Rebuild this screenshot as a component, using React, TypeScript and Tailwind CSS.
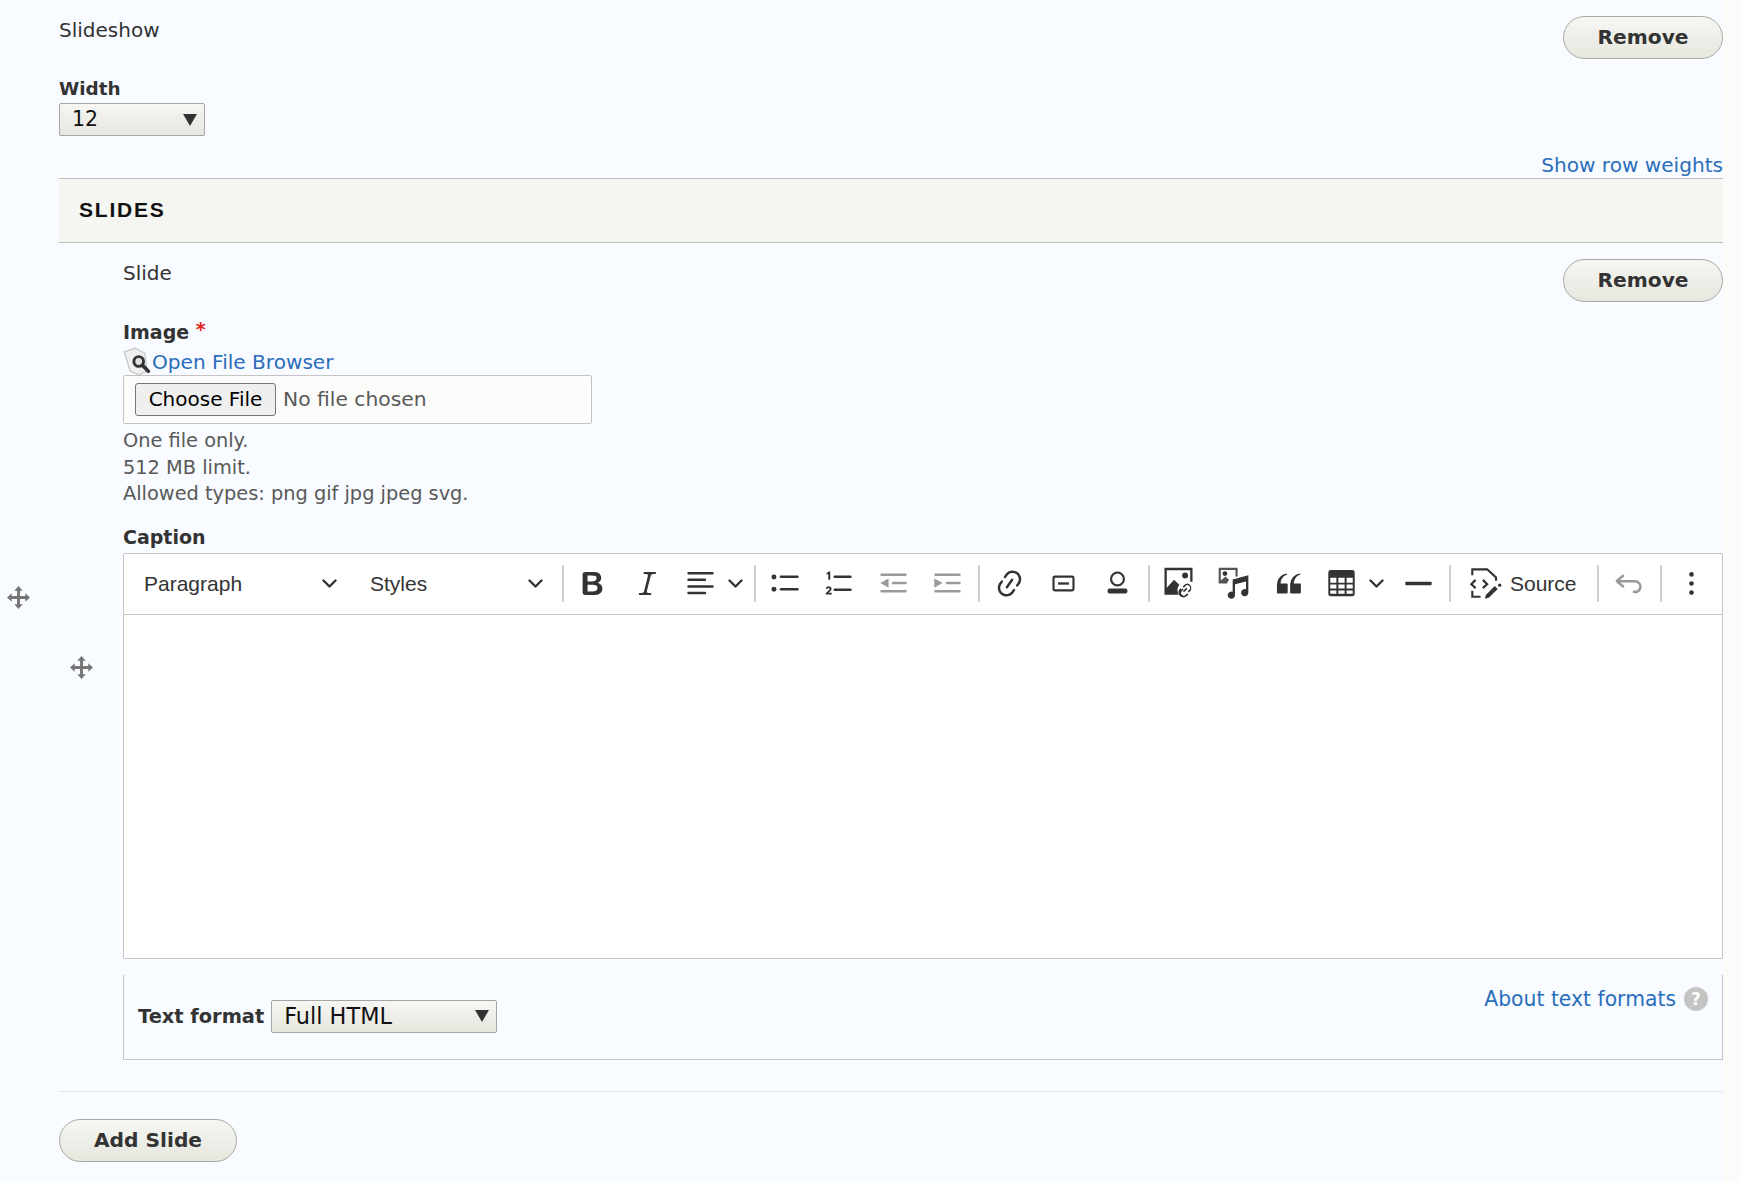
import React from "react";

const Ico = ({ children, className = "text-[#333]" }: { children: React.ReactNode; className?: string }) => (
  <svg viewBox="0 0 20 20" className={`w-[33px] h-[33px] shrink-0 fill-current ${className}`}>
    {children}
  </svg>
);

const Chevron = () => (
  <svg viewBox="0 0 10 10" className="w-[15px] h-[15px] shrink-0 fill-none stroke-[#333] stroke-[1.6]">
    <path d="M1 3l4 4 4-4" strokeLinecap="round" strokeLinejoin="round" />
  </svg>
);

const Sep = ({ className = "" }: { className?: string }) => (
  <div className={`w-[2px] h-[37px] bg-[#cfcfd3] shrink-0 ${className}`} />
);

const Btn = ({ w, children }: { w: string; children: React.ReactNode }) => (
  <div className={`${w} shrink-0 flex items-center justify-center h-full`}>{children}</div>
);

const Grip = () => (
  <svg viewBox="0 0 22 22" className="w-[23px] h-[23px] fill-[#767676]">
    <path d="M11 0l4 4.500h-2.600V9.600H17.500V7l4.500 4-4.500 4v-2.600h-5.100v5.100H15l-4 4.500-4-4.500h2.600v-5.100H4.500V15L0 11l4.500-4v2.600h5.100V4.500H7z" />
  </svg>
);

const Tri = () => (
  <svg viewBox="0 0 14 12" className="w-[14px] h-[12px] fill-[#333] shrink-0">
    <path d="M0 0h14L7 12z" />
  </svg>
);

const PillBtn = ({ w, children }: { w: string; children: React.ReactNode }) => (
  <button className={`${w} h-[43px] shrink-0 rounded-full border border-[#a9a9a4] bg-gradient-to-b from-[#f6f6f3] to-[#e7e7df] text-[#333] font-bold text-[20.2px] leading-none`}>
    {children}
  </button>
);

const SelectBox = ({ w, value, text }: { w: string; value: string; text: string }) => (
  <div className={`${w} ${text} h-[33px] shrink-0 rounded-[2px] border border-[#a6a6a6] bg-gradient-to-b from-[#f6f6f3] to-[#e7e7df] flex items-center justify-between pl-[12px] pr-[7px] text-[#111] leading-none`}>
    <span>{value}</span>
    <Tri />
  </div>
);

export default function App() {
  return (
    <div className="flex min-h-[1182px] bg-[#fbfbf9] font-['DejaVu_Sans',sans-serif] text-[#333]">
      <div className="w-[1723px] shrink-0 bg-[#f8fbff] flex">
        <div className="w-[59px] shrink-0 pt-[12px] h-[1182px] flex items-center justify-center pr-[23px]">
          <Grip />
        </div>
        <div className="flex-1 min-w-0 pt-[16px]">
          <div className="flex justify-between items-start">
            <div className="text-[20px] leading-[28px]">Slideshow</div>
            <PillBtn w="w-[160px]">Remove</PillBtn>
          </div>

          <div className="mt-[16px] text-[18.4px] leading-[26px] font-bold pt-[1px] -mb-[1px]">Width</div>
          <div className="mt-[2px]">
            <SelectBox w="w-[146px]" value="12" text="text-[20.5px]" />
          </div>

          <div className="mt-[16px] text-right text-[20.1px] leading-[26px] text-[#2a6ebb]">Show row weights</div>

          <div className="h-[65px] border-y border-[#bfbfba] bg-[#f5f5f2] flex items-center pl-[20px]">
            <span className="font-['Liberation_Sans',sans-serif] font-bold text-[21px] tracking-[1.8px] text-[#111] -mt-[2px]">SLIDES</span>
          </div>

          <div className="flex">
            <div className="w-[64px] shrink-0 flex items-center justify-center pr-[19px] pt-[2px]">
              <Grip />
            </div>
            <div className="flex-1 min-w-0 pt-[16px] pb-[31px]">
              <div className="flex justify-between items-start">
                <div className="text-[20px] leading-[26px] pt-[1px]">Slide</div>
                <PillBtn w="w-[160px]">Remove</PillBtn>
              </div>

              <div className="mt-[17px] text-[19px] leading-[26px] font-bold">
                Image <span className="text-[#e0271c] relative -top-[3px]">*</span>
              </div>

              <div className="mt-[3px] flex items-center h-[27px] text-[20.1px] leading-[26px] text-[#2a6ebb]">
                <svg viewBox="0 0 24 24" className="w-[29px] h-[29px] shrink-0">
                  <path d="M1 4l9-3 8 4 2 15-7 3-7-3z" fill="#efefef" stroke="#c4c4c4" strokeWidth="1" />
                  <circle cx="13" cy="12" r="4" fill="#dfe3e6" stroke="#333" strokeWidth="2.400" />
                  <path d="M16 15l5 5" stroke="#333" strokeWidth="3" strokeLinecap="round" />
                </svg>
                <span>Open File Browser</span>
              </div>

              <div className="w-[469px] h-[49px] rounded-[2px] border border-[#c4c4c4] bg-[#fcfcfa] flex items-center pl-[11px]">
                <button className="w-[141px] h-[33px] pb-[2px] rounded-[3px] border border-[#767676] bg-[#efefef] text-black text-[20px] leading-none">
                  Choose File
                </button>
                <span className="ml-[7px] text-[20.3px] text-[#595959]">No file chosen</span>
              </div>

              <div className="mt-[4px] text-[19.35px] leading-[26.6px] text-[#595959]">
                <div>One file only.</div>
                <div>512 MB limit.</div>
                <div>Allowed types: png gif jpg jpeg svg.</div>
              </div>

              <div className="mt-[16px] text-[19px] leading-[26px] font-bold">Caption</div>

              <div className="mt-[3px] h-[62px] border border-[#c4c4c4] rounded-t-[2px] bg-white flex items-center pl-[20px] pb-[1px] font-['Liberation_Sans',sans-serif] text-[21px] text-[#333]">
                <div className="w-[195px] shrink-0 flex items-center justify-between pr-[2px]">
                  <span>Paragraph</span>
                  <Chevron />
                </div>
                <div className="ml-[31px] w-[174px] shrink-0 flex items-center justify-between pr-[1px]">
                  <span>Styles</span>
                  <Chevron />
                </div>
                <Sep className="ml-[18px]" />
                <Btn w="w-[56px]">
                  <Ico>
                    <path d="M10.187 17H5.773c-.637 0-1.092-.138-1.364-.415-.273-.277-.409-.718-.409-1.323V4.738c0-.617.14-1.062.419-1.332.279-.27.73-.406 1.354-.406h4.68c.69 0 1.288.041 1.793.124.506.083.96.242 1.36.478.341.197.644.447.906.75a3.262 3.262 0 0 1 .808 2.162c0 1.401-.722 2.426-2.167 3.075C15.05 10.175 16 11.315 16 13.01a3.756 3.756 0 0 1-2.296 3.504 6.1 6.1 0 0 1-1.517.377c-.571.073-1.238.11-2 .11zm-.217-6.217H7v4.087h3.069c1.977 0 2.965-.69 2.965-2.072 0-.707-.256-1.22-.768-1.537-.512-.319-1.277-.478-2.296-.478zM7 5.13v3.619h2.606c.729 0 1.292-.067 1.69-.2a1.6 1.6 0 0 0 .91-.765c.165-.267.247-.566.247-.897 0-.707-.26-1.176-.778-1.409-.519-.232-1.31-.348-2.375-.348H7z" />
                  </Ico>
                </Btn>
                <Btn w="w-[54px]">
                  <Ico>
                    <path d="m9.586 14.633.021.004c-.036.335.095.655.393.962.082.083.173.15.274.201h1.474a.6.6 0 1 1 0 1.2H5.304a.6.6 0 0 1 0-1.2h1.15c.474-.07.809-.182 1.005-.334.157-.122.291-.32.404-.597l2.416-9.55a1.053 1.053 0 0 0-.281-.823 1.12 1.12 0 0 0-.442-.296H8.15a.6.6 0 0 1 0-1.2h6.443a.6.6 0 1 1 0 1.2h-1.195c-.376.056-.65.155-.823.296-.215.175-.423.439-.623.79l-2.366 9.347z" />
                  </Ico>
                </Btn>
                <div className="w-[80px] shrink-0 flex items-center pl-[10px]">
                  <Ico>
                    <path d="M2 3.75c0 .414.336.75.75.75h14.5a.75.75 0 1 0 0-1.5H2.750a.75.75 0 0 0-.75.75zm0 8c0 .414.336.75.75.75h14.500a.75.75 0 1 0 0-1.500H2.750a.75.75 0 0 0-.75.75zm0 4c0 .414.336.75.75.75h9.929a.75.75 0 1 0 0-1.500H2.750a.75.75 0 0 0-.75.75zm0-8c0 .414.336.75.75.75h9.929a.75.75 0 1 0 0-1.500H2.750a.75.75 0 0 0-.75.75z" />
                  </Ico>
                  <span className="ml-[11px]"><Chevron /></span>
                </div>
                <Sep />
                <Btn w="w-[55px]">
                  <span className="ml-[4px] flex">
                    <Ico>
                      <circle cx="3" cy="6" r="1.500" />
                      <circle cx="3" cy="13.500" r="1.500" />
                      <rect x="6.500" y="5.200" width="11.500" height="1.500" rx=".75" />
                      <rect x="6.500" y="12.700" width="11.500" height="1.500" rx=".75" />
                    </Ico>
                  </span>
                </Btn>
                <Btn w="w-[55px]">
                  <Ico>
                    <path d="M2.800 3.600l1.400-.8h.8v5h-1.200v-3.600l-1 .5z" />
                    <path d="M2.300 13.200c.1-1 .9-1.500 1.800-1.500 1 0 1.700.6 1.700 1.500 0 .8-.5 1.300-1.100 1.800l-.8.6h2v1H2.300v-.9l1.700-1.400c.4-.4.600-.6.600-1 0-.4-.2-.6-.6-.6-.3 0-.6.2-.6.600z" />
                    <rect x="7" y="5.200" width="11" height="1.500" rx=".75" />
                    <rect x="7" y="13" width="11" height="1.500" rx=".75" />
                  </Ico>
                </Btn>
                <Btn w="w-[54px]">
                  <Ico className="text-[#9a9a9a]">
                    <path d="M2 4.750C2 4.336 2.336 4 2.750 4h14.500a.75.75 0 1 1 0 1.500H2.750A.75.75 0 0 1 2 4.750zm7 5c0-.414.336-.75.75-.75h7.500a.75.75 0 1 1 0 1.500h-7.500A.75.75 0 0 1 9 9.750zm-7 5c0-.414.336-.75.75-.75h14.500a.75.75 0 1 1 0 1.500H2.750a.75.75 0 0 1-.75-.75zM7 7v5.500L2 9.750z" />
                  </Ico>
                </Btn>
                <Btn w="w-[54px]">
                  <Ico className="text-[#9a9a9a]">
                    <path d="M2 4.750C2 4.336 2.336 4 2.750 4h14.500a.75.75 0 1 1 0 1.500H2.750A.75.75 0 0 1 2 4.750zm7 5c0-.414.336-.75.75-.75h7.500a.75.75 0 1 1 0 1.500h-7.500A.75.75 0 0 1 9 9.750zm-7 5c0-.414.336-.75.75-.75h14.500a.75.75 0 1 1 0 1.500H2.750a.75.75 0 0 1-.75-.75zM2 7v5.500l5-2.750z" />
                  </Ico>
                </Btn>
                <Sep className="ml-[4px]" />
                <Btn w="w-[58px]">
                  <Ico>
                    <path d="m11.077 15 .991-1.416a.75.75 0 1 1 1.229.86l-1.148 1.64a.748.748 0 0 1-.217.206 5.251 5.251 0 0 1-8.503-5.955.741.741 0 0 1 .12-.274l1.147-1.639a.75.75 0 1 1 1.228.86L4.933 10.700l.006.003a3.750 3.750 0 0 0 6.132 4.294l.006.004zm5.494-5.335a.748.748 0 0 1-.12.274l-1.147 1.639a.75.75 0 1 1-1.228-.86l.86-1.230a3.750 3.750 0 0 0-6.144-4.301l-.86 1.229a.75.75 0 0 1-1.229-.86l1.148-1.640a.748.748 0 0 1 .217-.206 5.251 5.251 0 0 1 8.503 5.955zm-4.563-2.532a.75.75 0 0 1 .184 1.045l-3.155 4.505a.75.75 0 1 1-1.229-.86l3.155-4.506a.75.75 0 0 1 1.045-.184z" />
                  </Ico>
                </Btn>
                <Btn w="w-[50px]">
                  <Ico>
                    <path d="M4.800 5.200h10.400a1.500 1.500 0 0 1 1.500 1.500v6.600a1.500 1.500 0 0 1-1.500 1.500H4.800a1.500 1.500 0 0 1-1.500-1.500V6.700a1.500 1.500 0 0 1 1.500-1.500zm0 1.300a.3.3 0 0 0-.2.2v6.600a.3.3 0 0 0 .2.2h10.400a.3.3 0 0 0 .2-.2V6.700a.3.3 0 0 0-.2-.2z" fillRule="evenodd" />
                    <rect x="6.700" y="9.300" width="6.600" height="1.400" />
                  </Ico>
                </Btn>
                <Btn w="w-[58px]">
                  <Ico>
                    <path d="M10 2.700a4.550 4.550 0 1 1 0 9.100 4.550 4.550 0 0 1 0-9.100zm0 1.300a3.250 3.250 0 1 0 0 6.500 3.250 3.250 0 0 0 0-6.500z" fillRule="evenodd" />
                    <rect x="4" y="13" width="12" height="3" rx="1.200" />
                  </Ico>
                </Btn>
                <Sep className="ml-[2px]" />
                <Btn w="w-[56px]">
                  <Ico>
                    <path d="M1.500 .5h17V9h-1.400V2H2.900v10.500l4.400-4.800 3.200 3.100c-.7.900-1.100 2-1.100 3.200 0 1 .2 1.900.600 2.800H1.500z" />
                    <circle cx="14" cy="5.200" r="1.800" />
                    <path d="M15.500 10a3 3 0 0 0-2.200 1l-.8.900.8.700.8-.9a1.600 1.600 0 1 1 2.300 2.200l-.8.800.7.700.9-.8A3 3 0 0 0 15.500 10zm-4 3.800.8-.8.7.7-.8.8a1.600 1.600 0 1 0 2.300 2.200l.8-.8.700.7-.8.8a3 3 0 1 1-3.700-4.600zm3.200-1.200.7.7-2 2-.7-.7z" />
                  </Ico>
                </Btn>
                <Btn w="w-[55px]">
                  <Ico>
                    <path d="M1 .5h11.500v5.200h-1.300V1.800H2.300v6.400l2.800-2.500 2.200 2-1.300 2.300H1z" fill="#555" />
                    <circle cx="4.800" cy="4" r="1.400" />
                    <path d="M9.500 7.500L19 5v10.500a2.200 2.200 0 1 1-1.400-2V8.800l-6.700 1.700v6.500a2.200 2.200 0 1 1-1.400-2z" />
                  </Ico>
                </Btn>
                <Btn w="w-[54px]">
                  <Ico>
                    <path d="M3 10.423a6.500 6.500 0 0 1 6.056-6.408l.038.67C6.448 5.423 5.354 7.663 5.220 10H9c.552 0 .5.432.5.986v4.511c0 .554-.448.503-1 .503h-5c-.552 0-.5-.449-.5-1.003v-4.574zm8 0a6.500 6.500 0 0 1 6.056-6.408l.038.67c-2.646.739-3.740 2.979-3.873 5.315H17c.552 0 .5.432.5.986v4.511c0 .554-.448.503-1 .503h-5c-.552 0-.5-.449-.5-1.003v-4.574z" />
                  </Ico>
                </Btn>
                <div className="w-[76px] shrink-0 flex items-center pl-[10px]">
                  <Ico>
                    <path fillRule="evenodd" d="M3.500 1.800h13A1.500 1.500 0 0 1 18 3.300v13a1.500 1.500 0 0 1-1.500 1.500h-13A1.500 1.500 0 0 1 2 16.300v-13a1.500 1.500 0 0 1 1.500-1.500zM3.200 6.500v3h3.700v-3zm4.900 0v3h3.800v-3zm5 0v3h3.700v-3zM3.200 10.600v2.500h3.700v-2.500zm4.900 0v2.500h3.800v-2.500zm5 0v2.500h3.700v-2.500zM3.200 14.200v2h3.700v-2zm4.900 0v2h3.800v-2zm5 0v2h3.700v-2z" />
                  </Ico>
                  <span className="ml-[11px]"><Chevron /></span>
                </div>
                <Btn w="w-[54px]">
                  <Ico>
                    <rect x="2" y="9" width="16" height="2" rx=".5" />
                  </Ico>
                </Btn>
                <Sep className="ml-[4px]" />
                <div className="w-[146px] shrink-0 flex items-center pl-[18px] gap-[8px]">
                  <Ico>
                    <g fill="none" stroke="currentColor" strokeWidth="1.300">
                      <path d="M2 5V1.400h9l5.400 5v2" />
                      <path d="M2 14.400V18h5" />
                      <path d="M4 7.800l-2.600 2.600L4 12.800" />
                      <path d="M8.400 7.800l2.600 2.600-2.600 2.400" />
                    </g>
                    <path d="M15.600 11.500l1.800 1.800-5.400 5.400-2.400.6.6-2.400z" />
                    <circle cx="18.600" cy="11" r="1" />
                  </Ico>
                  <span>Source</span>
                </div>
                <Sep />
                <Btn w="w-[58px]">
                  <Ico className="text-[#9a9a9a]">
                    <path d="m5.042 9.367 2.189 1.837a.75.75 0 0 1-.965 1.149l-3.788-3.180a.747.747 0 0 1-.21-.284.75.75 0 0 1 .17-.945L6.230 4.762a.75.75 0 1 1 .964 1.150L4.863 7.866h8.917A.75.75 0 0 1 14 7.900a4 4 0 1 1-1.477 7.718l.344-1.489a2.500 2.500 0 1 0 1.094-4.730l.008-.032H5.042z" />
                  </Ico>
                </Btn>
                <Sep className="ml-[3px]" />
                <Btn w="w-[58px]">
                  <Ico>
                    <circle cx="10" cy="4.500" r="1.400" />
                    <circle cx="10" cy="10" r="1.400" />
                    <circle cx="10" cy="15.500" r="1.400" />
                  </Ico>
                </Btn>
              </div>
              <div className="h-[344px] border-x border-b border-[#c4c4c4] rounded-b-[2px] bg-white" />

              <div className="mt-[16px] h-[85px] border-x border-b border-[#c4c4c4] flex justify-between items-start pl-[14px] pr-[14px]">
                <div className="pt-[25px] flex items-center gap-[7px]">
                  <span className="text-[19.4px] font-bold leading-[33px]">Text format</span>
                  <SelectBox w="w-[226px]" value="Full HTML" text="text-[22.4px]" />
                </div>
                <div className="pt-[11px] flex items-center gap-[8px]">
                  <span className="text-[20.35px] leading-[26px] text-[#2a6ebb]">About text formats</span>
                  <span className="w-[24px] h-[24px] rounded-full bg-[#c4c4c4] text-white font-bold text-[17px] leading-[24px] text-center">?</span>
                </div>
              </div>
            </div>
          </div>

          <div className="border-t border-[#e6e6e3]" />
          <div className="mt-[27px]">
            <PillBtn w="w-[178px]">Add Slide</PillBtn>
          </div>
        </div>
      </div>
      <div className="flex-1" />
    </div>
  );
}
